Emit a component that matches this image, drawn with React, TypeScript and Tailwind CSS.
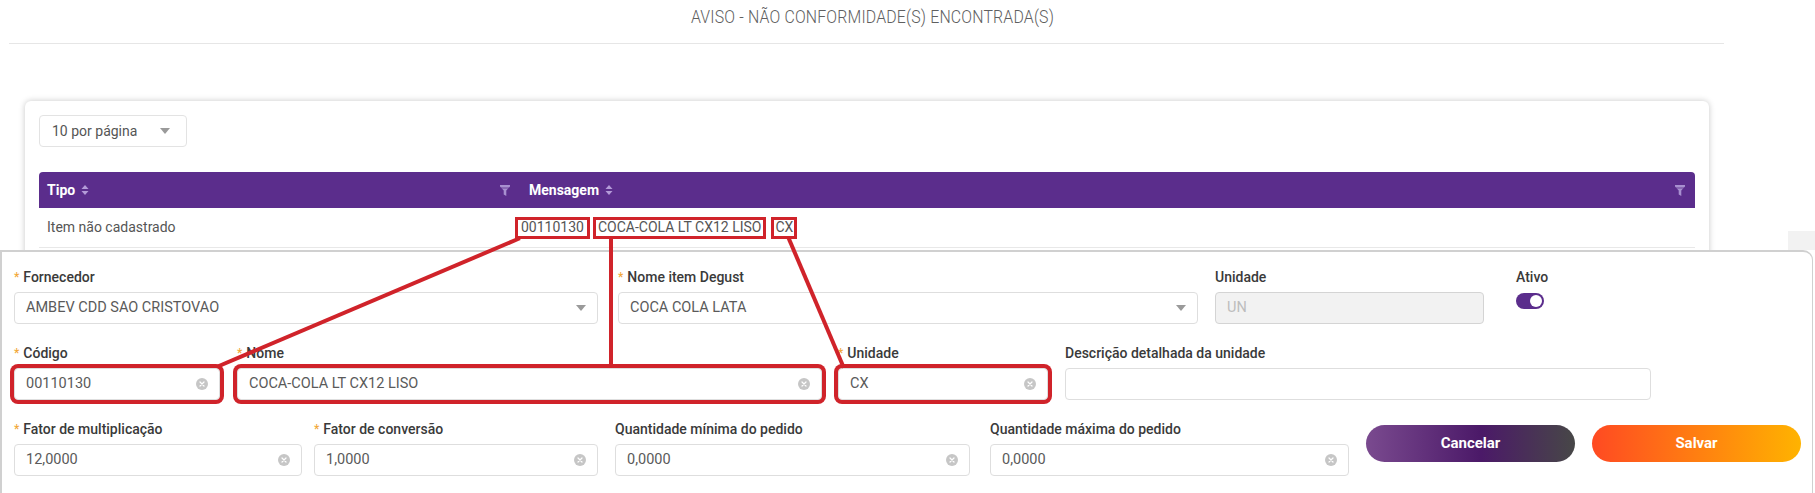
import React from "react";

const RED = "#d0232a";

function SortIcon() {
  return (
    <svg width="8" height="12" viewBox="0 0 8 12" className="ml-[6px]">
      <path d="M4 1 L7.5 5 H0.5 Z" fill="#b49bd8" />
      <path d="M4 11 L7.5 7 H0.5 Z" fill="#b49bd8" />
    </svg>
  );
}

function FilterIcon() {
  return (
    <svg width="10" height="11" viewBox="0 0 10 11">
      <path d="M0 0 H10 V1.6 L6.3 5.4 V11 L3.7 9.6 V5.4 L0 1.6 Z" fill="#a890d0" />
      <path d="M0.8 3 H9.2" stroke="#5b2d8c" strokeWidth="0.8" />
    </svg>
  );
}

function ClearIcon() {
  return (
    <svg width="12" height="12" viewBox="0 0 12 12">
      <circle cx="6" cy="6" r="6" fill="#c6c6c6" />
      <path d="M4 4 L8 8 M8 4 L4 8" stroke="#fff" strokeWidth="1.2" strokeLinecap="round" />
    </svg>
  );
}

function Caret() {
  return (
    <svg width="10" height="6" viewBox="0 0 10 6">
      <path d="M0 0 H10 L5 6 Z" fill="#9a9a9a" />
    </svg>
  );
}

type Kind = "select" | "clear" | "plain" | "disabled";

function Field({
  label,
  required,
  value,
  kind,
  width,
  highlight,
  className = "",
}: {
  label: string;
  required?: boolean;
  value: string;
  kind: Kind;
  width: string;
  highlight?: boolean;
  className?: string;
}) {
  return (
    <div className={`flex flex-col ${width} ${className}`}>
      <label className="flex h-[18px] items-center text-[14px] font-medium leading-[18px] text-[#3a3a3a]">
        {required && <span className="mr-[4px] text-[12px] text-[#f2a93b]">*</span>}
        {label}
      </label>
      <div
        className={`mt-[6px] flex h-[32px] items-center justify-between rounded-[4px] border px-[11px] text-[14.5px] ${
          kind === "disabled"
            ? "border-[#d4d4d4] bg-[#f2f2f2] text-[#bdbdbd]"
            : "border-[#dedede] bg-white text-[#5a5a5a]"
        } ${highlight ? "shadow-[0_0_0_4px_#d0232a]" : ""}`}
      >
        <span>{value}</span>
        {kind === "select" && <Caret />}
        {kind === "clear" && <ClearIcon />}
      </div>
    </div>
  );
}

export default function App() {
  return (
    <div className="relative h-[493px] w-[1815px] overflow-hidden bg-white font-['Roboto',sans-serif]">
      {/* page behind the form */}
      <div className="h-[250px] overflow-hidden">
        <div className="ml-[9px] flex h-[44px] w-[1715px] justify-center border-b border-[#e6e6e6] pl-[12px] pt-[5px]">
          <h1 className="inline-block origin-center scale-x-[0.835] text-[19px] font-light leading-[24px] tracking-[0.2px] text-[#5f5f5f]">
            AVISO - NÃO CONFORMIDADE(S) ENCONTRADA(S)
          </h1>
        </div>

        <div className="flex h-[206px]">
          <div className="ml-[25px] mt-[57px] h-[220px] w-[1684px] shrink-0 rounded-[6px] bg-white px-[14px] pt-[14px] shadow-[0_0_6px_rgba(0,0,0,0.22)]">
            <div className="flex h-[32px] w-[148px] items-center justify-between rounded-[4px] border border-[#e3e3e3] pl-[12px] pr-[16px] text-[14px] text-[#555]">
              <span>10 por página</span>
              <Caret />
            </div>

            <div className="mt-[25px] flex h-[36px] items-center rounded-t-[4px] bg-[#5b2d8c] text-[14px] font-bold text-white">
              <div className="flex w-[476px] items-center justify-between pl-[8px] pr-[5px]">
                <span className="flex items-center">
                  Tipo
                  <SortIcon />
                </span>
                <FilterIcon />
              </div>
              <div className="flex flex-1 items-center justify-between pl-[14px] pr-[10px]">
                <span className="flex items-center">
                  Mensagem
                  <SortIcon />
                </span>
                <FilterIcon />
              </div>
            </div>

            <div className="flex h-[40px] items-center border-b border-[#e8e8e8] text-[14px] text-[#555]">
              <div className="w-[476px] pl-[8px]">Item não cadastrado</div>
              <div className="flex items-center">
                <span className="flex h-[22px] items-center border-[3px] border-[#d0232a] px-[3px]">00110130</span>
                <span className="ml-[3px] flex h-[22px] items-center border-[3px] border-[#d0232a] px-[2px]">
                  COCA-COLA LT CX12 LISO
                </span>
                <span className="ml-[5px] flex h-[22px] items-center border-[3px] border-[#d0232a] px-[1px]">CX</span>
              </div>
            </div>
          </div>
          <div className="flex-1" />
          <div className="h-[19px] w-[27px] self-end bg-[#f2f2f2]" />
        </div>
      </div>

      {/* form panel */}
      <div className="h-[243px] w-[1813px] rounded-tr-[10px] border-l-2 border-r border-t-2 border-[#d0d0d0] bg-white pl-[12px] pt-[16px]">
        <div className="flex">
          <Field label="Fornecedor" required value="AMBEV CDD SAO CRISTOVAO" kind="select" width="w-[584px]" />
          <Field label="Nome item Degust" required value="COCA COLA LATA" kind="select" width="w-[580px]" className="ml-[20px]" />
          <Field label="Unidade" value="UN" kind="disabled" width="w-[269px]" className="ml-[17px]" />
          <div className="ml-[32px] flex flex-col">
            <span className="h-[18px] text-[14px] font-medium leading-[18px] text-[#3a3a3a]">Ativo</span>
            <div className="mt-[7px] flex h-[16px] w-[28px] items-center justify-end rounded-full bg-[#5b2d8c] pr-[2px]">
              <div className="h-[12px] w-[12px] rounded-full bg-white" />
            </div>
          </div>
        </div>

        <div className="mt-[20px] flex">
          <Field label="Código" required value="00110130" kind="clear" width="w-[206px]" highlight />
          <Field label="Nome" required value="COCA-COLA LT CX12 LISO" kind="clear" width="w-[585px]" className="ml-[17px]" highlight />
          <Field label="Unidade" required value="CX" kind="clear" width="w-[210px]" className="ml-[16px]" highlight />
          <Field label="Descrição detalhada da unidade" value="" kind="plain" width="w-[586px]" className="ml-[17px]" />
        </div>

        <div className="mt-[20px] flex items-start">
          <Field label="Fator de multiplicação" required value="12,0000" kind="clear" width="w-[288px]" />
          <Field label="Fator de conversão" required value="1,0000" kind="clear" width="w-[284px]" className="ml-[12px]" />
          <Field label="Quantidade mínima do pedido" value="0,0000" kind="clear" width="w-[355px]" className="ml-[17px]" />
          <Field label="Quantidade máxima do pedido" value="0,0000" kind="clear" width="w-[359px]" className="ml-[20px]" />
          <button
            type="button"
            className="ml-[17px] mt-[5px] h-[37px] w-[209px] rounded-full bg-[linear-gradient(to_right,#7a4a8f,#4b1968_55%,#474747)] text-[15px] font-bold text-white"
          >
            Cancelar
          </button>
          <button
            type="button"
            className="ml-[17px] mt-[5px] h-[37px] w-[209px] rounded-full bg-[linear-gradient(to_right,#ff4a22,#ffb300)] text-[15px] font-bold text-white"
          >
            Salvar
          </button>
        </div>
      </div>

      {/* annotation lines */}
      <svg
        className="pointer-events-none absolute left-0 top-0"
        width="1815"
        height="493"
        viewBox="0 0 1815 493"
      >
        <g stroke={RED} strokeWidth="4" strokeLinecap="square">
          <line x1="518" y1="239" x2="219" y2="366" />
          <line x1="611" y1="239" x2="611" y2="366" />
          <line x1="789" y1="239" x2="843" y2="366" />
        </g>
      </svg>
    </div>
  );
}
